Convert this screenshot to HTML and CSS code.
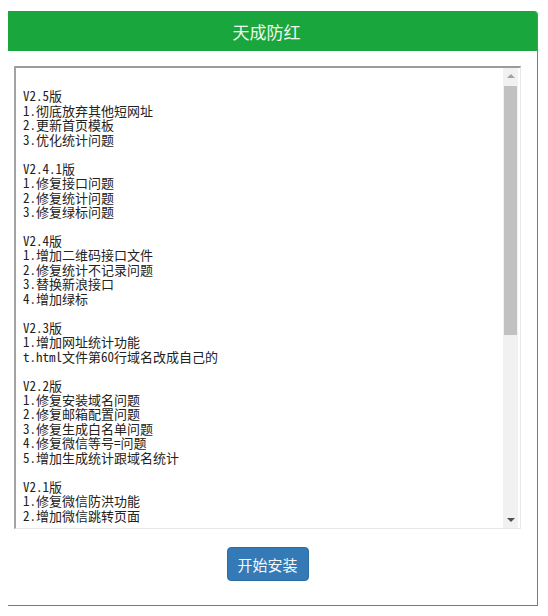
FILE: index.html
```html
<!DOCTYPE html>
<html lang="zh-CN">
<head>
<meta charset="utf-8">
<title>天成防红</title>
<link rel="stylesheet" href="styles.css">
</head>
<body>
<div class="panel">
  <div class="panel-head">天成防红</div>
  <div class="panel-body">
    <div class="log">
      <div class="log-text">
V2.5版
1.彻底放弃其他短网址
2.更新首页模板
3.优化统计问题

V2.4.1版
1.修复接口问题
2.修复统计问题
3.修复绿标问题

V2.4版
1.增加二维码接口文件
2.修复统计不记录问题
3.替换新浪接口
4.增加绿标

V2.3版
1.增加网址统计功能
t.html文件第60行域名改成自己的

V2.2版
1.修复安装域名问题
2.修复邮箱配置问题
3.修复生成白名单问题
4.修复微信等号=问题
5.增加生成统计跟域名统计

V2.1版
1.修复微信防洪功能
2.增加微信跳转页面</div>
      <div class="scrollbar">
        <div class="sb-btn"><span class="arrow-up"></span></div>
        <div class="sb-track"><div class="sb-thumb"></div></div>
        <div class="sb-btn"><span class="arrow-down"></span></div>
      </div>
    </div>
    <div class="actions">
      <button class="btn-install">开始安装</button>
    </div>
  </div>
</div>
</body>
</html>
```

FILE: styles.css
```css
html, body {
  margin: 0;
  padding: 0;
  background: #ffffff;
}

body {
  font-family: "Noto Sans CJK SC", "Noto Sans", sans-serif;
}

.panel {
  box-sizing: border-box;
  width: 530px;
  height: 595px;
  margin: 11px 0 0 8px;
  border-right: 1px solid #55899a;
  border-bottom: 1px solid #55899a;
  border-top-right-radius: 4px;
  display: flex;
  flex-direction: column;
}

.panel-head {
  height: 40px;
  background: #19a73d;
  color: #eef8ee;
  font-size: 17px;
  display: flex;
  align-items: center;
  justify-content: center;
  padding-right: 12px;
  border-top-right-radius: 3px;
}

.panel-body {
  padding: 15px 0 0 6px;
  width: 507px;
}

.log {
  box-sizing: border-box;
  width: 507px;
  height: 463px;
  border-top: 2px solid #9b9b9b;
  border-left: 2px solid #a3a3a3;
  border-right: 1px solid #e8e8e8;
  border-bottom: 1px solid #e8e8e8;
  display: flex;
  padding-right: 2px;
  background: #fff;
}

.log-text {
  flex: 1;
  overflow: hidden;
  white-space: pre;
  padding: 7px 0 0 7px;
  font-family: "Noto Sans Mono CJK SC", "Noto Sans CJK SC", "Liberation Mono", monospace;
  font-size: 13px;
  line-height: 14.45px;
  color: #222;
}

.scrollbar {
  width: 15px;
  display: flex;
  flex-direction: column;
  background: #f1f1f1;
}

.sb-btn {
  height: 16px;
  display: flex;
  align-items: center;
  justify-content: center;
}

.sb-track {
  flex: 1;
  padding: 2px 1px;
}

.sb-thumb {
  height: 249px;
  background: #c1c1c1;
}

.arrow-up {
  width: 0;
  height: 0;
  border-left: 4px solid transparent;
  border-right: 4px solid transparent;
  border-bottom: 4px solid #a3a3a3;
}

.arrow-down {
  width: 0;
  height: 0;
  border-left: 4px solid transparent;
  border-right: 4px solid transparent;
  border-top: 4px solid #505050;
}

.actions {
  display: flex;
  justify-content: center;
  padding-top: 18px;
}

.btn-install {
  box-sizing: border-box;
  width: 82px;
  height: 34px;
  background: #337ab7;
  border: 1px solid #2e6da4;
  border-radius: 4px;
  color: #f4f8fc;
  font-family: "Noto Sans CJK SC", sans-serif;
  font-size: 15px;
  padding: 0;
}
```
